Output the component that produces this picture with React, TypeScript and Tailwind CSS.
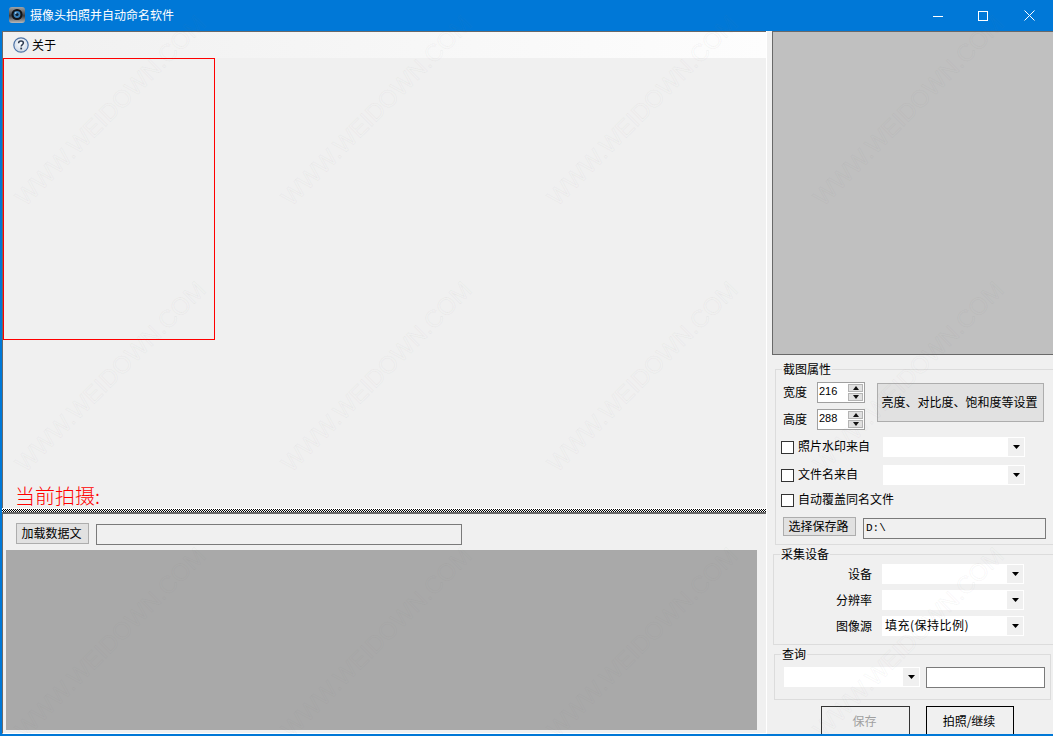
import React from "react";

const FONT = "font-['Noto_Sans_CJK_SC','Liberation_Sans',sans-serif]";

function Arrow() {
  return (
    <svg width="7" height="4" viewBox="0 0 7 4" className="block">
      <path d="M0 0H7L3.5 4Z" fill="#000" />
    </svg>
  );
}

function Combo({ w, text }: { w: string; text?: string }) {
  return (
    <div className={`${w} h-[20px] bg-white flex items-center justify-between shrink-0`}>
      <span className="pl-[3px] text-[12px] leading-[18px] pb-[2px] tracking-[0.5px] text-black whitespace-nowrap">{text}</span>
      <div className="w-[16px] h-[18px] mr-px bg-[#f0f0f0] flex items-center justify-center">
        <Arrow />
      </div>
    </div>
  );
}

function Spinner({ value }: { value: string }) {
  return (
    <div className="w-[48px] h-[21px] border border-[#a0a0a0] bg-white flex justify-between box-border">
      <span className="pl-px text-[11px] leading-[16px] font-['Liberation_Sans',sans-serif] text-black">{value}</span>
      <div className="w-[15px] mr-px flex flex-col gap-px py-px">
        <div className="h-[8px] bg-[#e1e1e1] border border-[#b4b4b4] flex items-center justify-center">
          <svg width="6" height="4" viewBox="0 0 6 4"><path d="M3 0L6 4H0Z" fill="#111" /></svg>
        </div>
        <div className="h-[8px] bg-[#e1e1e1] border border-[#b4b4b4] flex items-center justify-center">
          <svg width="6" height="4" viewBox="0 0 6 4"><path d="M0 0H6L3 4Z" fill="#111" /></svg>
        </div>
      </div>
    </div>
  );
}

function Check({ label }: { label: string }) {
  return (
    <div className="flex items-center ml-[5px] w-[102px] shrink-0">
      <div className="w-[13px] h-[13px] bg-white border border-[#333] shrink-0" />
      <span className="ml-[4px] pb-[2px] text-[12px] leading-[16px] text-black whitespace-nowrap">{label}</span>
    </div>
  );
}

function Legend({ text }: { text: string }) {
  return <legend className="ml-[6px] px-px h-[16px] text-[12px] leading-[16px] text-black">{text}</legend>;
}

const XS = [28, 294, 560, 826];
const YS = [210, 476, 742];
const WATERMARKS = YS.flatMap((y) => XS.map((x) => [x, y]));

function Watermarks() {
  return (
    <div className="absolute inset-0 overflow-hidden pointer-events-none">
      {WATERMARKS.map(([x, y], i) => (
        <span
          key={i}
          className="absolute origin-bottom-left -rotate-45 whitespace-nowrap text-[24px] leading-[24px] font-['Liberation_Sans',sans-serif] text-transparent [-webkit-text-stroke:1px_rgba(120,120,120,0.06)]"
          style={{ left: x, top: y - 24 }}
        >
          WWW.WEIDOWN.COM
        </span>
      ))}
    </div>
  );
}

export default function App() {
  return (
    <div className={`relative w-[1053px] h-[736px] overflow-hidden bg-[#0078d7] flex flex-col ${FONT}`}>
      {/* Title bar */}
      <div className="h-[31px] shrink-0 flex items-center text-white">
        <svg width="16" height="16" viewBox="0 0 16 16" className="ml-[9px] mb-[1px]">
          <defs>
            <linearGradient id="cam" x1="0" y1="0" x2="0" y2="1">
              <stop offset="0" stopColor="#a0a4a8" />
              <stop offset="0.55" stopColor="#3a3d41" />
              <stop offset="1" stopColor="#b8babc" />
            </linearGradient>
          </defs>
          <rect x="0" y="0" width="16" height="16" rx="3" fill="url(#cam)" />
          <circle cx="8" cy="7.5" r="5.5" fill="#101418" />
          <circle cx="8" cy="7.5" r="3.4" fill="#3a80b8" />
          <circle cx="8" cy="7.5" r="1.6" fill="#0b1d30" />
          <circle cx="6.8" cy="6" r="0.8" fill="#d8ecfa" />
        </svg>
        <span className="ml-[5px] text-[12px] leading-[16px] mb-[1px]">摄像头拍照并自动命名软件</span>
        <div className="ml-auto mr-px flex items-center h-full">
          <div className="w-[46px] h-full pl-[2px] flex items-center justify-center">
            <svg width="10" height="10" viewBox="0 0 10 10"><path d="M0 5.5H10" stroke="#fff" /></svg>
          </div>
          <div className="w-[46px] h-full flex items-center justify-center">
            <svg width="10" height="10" viewBox="0 0 10 10"><rect x="0.5" y="0.5" width="9" height="9" fill="none" stroke="#fff" /></svg>
          </div>
          <div className="w-[46px] h-full flex items-center justify-center">
            <svg width="11" height="11" viewBox="0 0 11 11"><path d="M0.5 0.5L10.5 10.5M10.5 0.5L0.5 10.5" stroke="#fff" /></svg>
          </div>
        </div>
      </div>

      {/* Body */}
      <div className="flex-1 min-h-0 ml-[2px] mb-[2px] bg-[#f0f0f0] flex overflow-hidden text-black">
        {/* Left */}
        <div className="w-[765px] shrink-0 flex flex-col border-r border-white">
          <div className="h-[477px] shrink-0 flex flex-col border-t border-l border-[#696969]">
            <div className="h-[26px] shrink-0 flex items-center bg-linear-to-r from-[#f0f0f0] to-[#fdfdfd]">
              <svg width="16" height="16" viewBox="0 0 16 16" className="ml-[10px]">
                <defs>
                  <radialGradient id="hlp" cx="0.5" cy="0.4" r="0.6">
                    <stop offset="0" stopColor="#ffffff" />
                    <stop offset="1" stopColor="#cdd8e6" />
                  </radialGradient>
                </defs>
                <circle cx="8" cy="8" r="7.2" fill="url(#hlp)" stroke="#4f74a6" strokeWidth="1.2" />
                <path d="M5.6 6.2C5.6 4.8 6.7 4 8 4C9.4 4 10.4 4.8 10.4 6C10.4 7.6 8.2 7.6 8.2 9.4" fill="none" stroke="#2d3a4e" strokeWidth="1.5" />
                <rect x="7.3" y="10.6" width="1.8" height="1.8" fill="#2d3a4e" />
              </svg>
              <span className="ml-[3px] text-[12px] leading-[16px]">关于</span>
            </div>
            <div className="w-[212px] h-[282px] border border-[#ff0000] shrink-0" />
            <div className="mt-auto pl-[12px] h-[24px] leading-[24px] text-[20px] text-[#ff0000] font-light whitespace-nowrap shrink-0">
              当前拍摄:
            </div>
          </div>
          <div className="h-[6px] shrink-0 flex flex-col">
            <div className="h-px bg-white" />
            <div className="h-[3px] [background:repeating-conic-gradient(#000_0%_25%,#fff_0%_50%)_0_0/2px_2px]" />
            <div className="h-[2px] bg-[#696969]" />
          </div>
          <div className="flex-1 min-h-0 flex flex-col border-l border-b border-l-[#696969] border-b-white">
            <div className="flex items-start mt-[9px] ml-[13px]">
              <button className="w-[73px] h-[21px] pr-[2px] pb-[2px] bg-[#e1e1e1] border border-[#adadad] text-[12px] leading-[16px] text-black">
                加载数据文
              </button>
              <div className="ml-[7px] mt-px w-[366px] h-[21px] border border-[#7a7a7a]" />
            </div>
            <div className="ml-[3px] mt-[5px] w-[751px] h-[180px] bg-[#a9a9a9]" />
          </div>
        </div>

        {/* Right */}
        <div className="flex-1 min-w-0 ml-[5px] flex flex-col">
          <div className="h-[324px] shrink-0 bg-[#c0c0c0] border-t border-l border-b border-[#696969]" />

          <fieldset className="mt-[6px] ml-[3px] -mr-[4px] border border-[#dcdcdc] pb-[5px]">
            <Legend text="截图属性" />
            <div className="flex mt-[5px]">
              <div className="flex flex-col gap-[6px]">
                <div className="flex items-center h-[21px]">
                  <span className="ml-[7px] w-[34px] pb-[2px] text-[12px] leading-[16px]">宽度</span>
                  <Spinner value="216" />
                </div>
                <div className="flex items-center h-[21px]">
                  <span className="ml-[7px] w-[34px] pb-[2px] text-[12px] leading-[16px]">高度</span>
                  <Spinner value="288" />
                </div>
              </div>
              <button className="ml-[12px] mt-px w-[167px] h-[39px] pr-[2px] pb-[2px] bg-[#e1e1e1] border border-[#adadad] text-[12px] leading-[16px] text-black whitespace-nowrap">
                亮度、对比度、饱和度等设置
              </button>
            </div>
            <div className="flex items-center mt-[7px]">
              <Check label="照片水印来自" />
              <Combo w="w-[142px]" />
            </div>
            <div className="flex items-center mt-[8px]">
              <Check label="文件名来自" />
              <Combo w="w-[142px]" />
            </div>
            <div className="flex items-center h-[18px] mt-[6px]">
              <Check label="自动覆盖同名文件" />
            </div>
            <div className="flex items-start mt-[8px] ml-[7px]">
              <button className="w-[73px] h-[19px] pr-[2px] pb-[2px] bg-[#e1e1e1] border border-[#adadad] text-[12px] leading-[14px] text-black">
                选择保存路
              </button>
              <div className="ml-[7px] mt-px w-[183px] h-[21px] border border-[#7a7a7a] pl-[2px] text-[11px] leading-[18px] font-['Liberation_Mono',monospace]">
                D:\
              </div>
            </div>
          </fieldset>

          <fieldset className="mt-px ml-px -mr-[4px] border border-[#dcdcdc] pb-[8px]">
            <Legend text="采集设备" />
            <div className="mt-[2px] flex flex-col gap-[6px]">
              {[["设备", ""], ["分辨率", ""], ["图像源", "填充(保持比例)"]].map(([l, t]) => (
                <div key={l} className="flex items-center">
                  <span className="w-[98px] text-right text-[12px] leading-[16px]">{l}</span>
                  <span className="w-[10px]" />
                  <Combo w="w-[142px]" text={t} />
                </div>
              ))}
            </div>
          </fieldset>

          <fieldset className="mt-px ml-[2px] w-[277px] border border-[#dcdcdc] pb-[11px]">
            <Legend text="查询" />
            <div className="flex mt-[5px] ml-[9px]">
              <Combo w="w-[136px]" />
              <div className="ml-[6px] w-[119px] h-[21px] bg-white border border-[#7a7a7a]" />
            </div>
          </fieldset>

          <div className="flex mt-[6px] ml-[49px] gap-[16px]">
            <button className="w-[89px] h-[32px] pr-[2px] pb-[2px] border border-[#333] bg-[#f0f0f0] text-[12px] text-[#a0a0a0]">保存</button>
            <button className="w-[88px] h-[32px] pr-[2px] pb-[2px] border border-black bg-[#f0f0f0] text-[12px] text-black">拍照/继续</button>
          </div>
        </div>
      </div>
      <Watermarks />
    </div>
  );
}
